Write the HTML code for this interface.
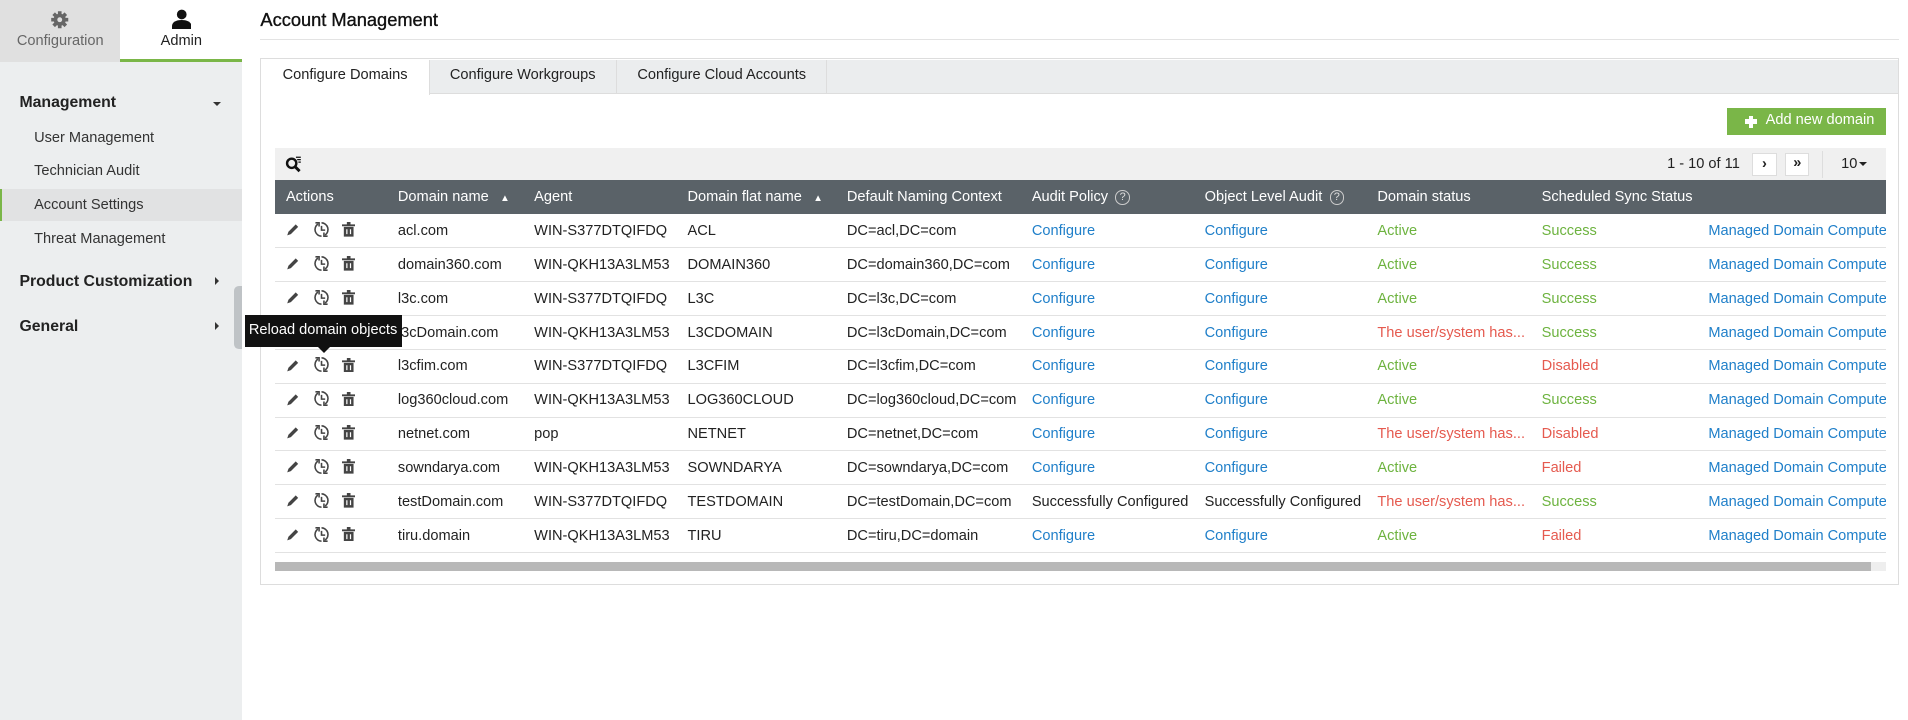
<!DOCTYPE html>
<html><head><meta charset="utf-8"><style>
*{margin:0;padding:0;box-sizing:border-box}
html,body{width:1908px;height:720px;overflow:hidden;background:#fff}
#w{width:1568px;height:592px;zoom:1.21684;position:relative;font-family:"Liberation Sans",sans-serif;font-size:12px;color:#222}
.a{position:absolute}
#sb{left:0;top:0;width:199px;height:592px;background:#eceeef}
.si{position:absolute;left:28px;font-size:12px;color:#333}
.sh{position:absolute;left:16px;font-size:13px;font-weight:bold;color:#222}
table{border-collapse:collapse;position:absolute;left:226px;top:148px;width:1324px;table-layout:fixed}
th{background:#5a6268;color:#fff;font-weight:normal;text-align:left;height:28px;padding:0;white-space:nowrap;overflow:hidden}
td{height:27.8px;border-bottom:1px solid #e2e2e2;padding:0;white-space:nowrap;overflow:hidden}
.l{color:#1f7fc9}.g{color:#6db33f}.r{color:#e55a4f}
.q{display:inline-block;width:12px;height:12px;border:1px solid #ccc;border-radius:50%;font-size:9px;text-align:center;line-height:10px;margin-left:6px;color:#ddd;vertical-align:middle}
.ic{display:inline-flex;gap:10px;align-items:center;padding-left:9px}
</style></head><body><div id="w">
<div id="sb" class="a">
<div class="a" style="left:0;top:0;width:99px;height:51px;background:#e0e0e0"></div>
<div class="a" style="left:99px;top:0;width:100px;height:51px;background:#fff;border-bottom:3px solid #7ab648"></div>
<svg class="a" style="left:41px;top:8px" width="16" height="16" viewBox="0 0 16 16"><circle cx="8" cy="8" r="5" fill="#666"/><g stroke="#666" stroke-width="3"><path d="M8 1v14M1 8h14M3 3l10 10M13 3L3 13"/></g><circle cx="8" cy="8" r="2" fill="#e0e0e0"/></svg>
<div class="a" style="left:0;top:27px;width:99px;text-align:center;color:#666">Configuration</div>
<svg class="a" style="left:141px;top:7px" width="16" height="17" viewBox="0 0 16 17"><circle cx="8" cy="4.5" r="4" fill="#111"/><path d="M0 17v-3c0-3 3-5 8-5s8 2 8 5v3z" fill="#111"/></svg>
<div class="a" style="left:99px;top:27px;width:100px;text-align:center;color:#222">Admin</div>
<div class="sh" style="top:77px">Management</div>
<div class="a" style="left:175px;top:84px;border:4px solid transparent;border-top:4px solid #333"></div>
<div class="si" style="top:107px">User Management</div>
<div class="si" style="top:134px">Technician Audit</div>
<div class="a" style="left:0;top:155px;width:199px;height:27px;background:#e1e2e3;border-left:2px solid #7ab648"></div>
<div class="si" style="top:162px">Account Settings</div>
<div class="si" style="top:190px">Threat Management</div>
<div class="sh" style="top:224px">Product Customization</div>
<div class="a" style="left:177px;top:228px;border:4px solid transparent;border-left:4px solid #333"></div>
<div class="sh" style="top:261px">General</div>
<div class="a" style="left:177px;top:265px;border:4px solid transparent;border-left:4px solid #333"></div>
<div class="a" style="left:192px;top:235px;width:7px;height:52px;background:#bfc3c6;border-radius:4px 0 0 4px"></div>
</div>
<div class="a" style="left:214px;top:7px;font-size:15px;color:#111;-webkit-text-stroke:0.3px #111">Account Management</div>
<div class="a" style="left:214px;top:32px;width:1347px;height:1px;background:#e3e3e3"></div>
<div class="a" style="left:214px;top:48px;width:1347px;height:433px;border:1px solid #ddd"></div>
<div class="a" style="left:215px;top:49px;width:1345px;height:28px;background:#ebedee;border-bottom:1px solid #ddd"></div>
<div class="a" style="left:215px;top:49px;width:138px;height:29px;background:#fff;border-right:1px solid #ddd;text-align:center;line-height:26px">Configure Domains</div>
<div class="a" style="left:353px;top:49px;width:154px;height:28px;border-right:1px solid #ddd;text-align:center;line-height:26px">Configure Workgroups</div>
<div class="a" style="left:507px;top:49px;width:173px;height:28px;border-right:1px solid #ddd;text-align:center;line-height:26px">Configure Cloud Accounts</div>
<div class="a" style="left:1419px;top:89px;width:131px;height:22px;background:#7ab648;color:#fff;line-height:21px;padding-left:32px">Add new domain</div>
<div class="a" style="left:1434px;top:95px;width:10px;height:10px"><div class="a" style="left:3px;top:0;width:4px;height:10px;background:#fff"></div><div class="a" style="left:0;top:3px;width:10px;height:4px;background:#fff"></div></div>
<div class="a" style="left:226px;top:122px;width:1324px;height:26px;background:#f0f0f0"></div>
<svg class="a" style="left:234px;top:128px" width="14" height="14" viewBox="0 0 14 14"><circle cx="5.5" cy="6" r="3.8" fill="none" stroke="#111" stroke-width="2"/><path d="M8 8.5l4 4" stroke="#111" stroke-width="2.4"/><path d="M9 1h4M10 3h3M11 5h2" stroke="#111"/></svg>
<div class="a" style="left:1370px;top:128px">1 - 10 of 11</div>
<div class="a" style="left:1440px;top:126px;width:20px;height:19px;background:#fff;border:1px solid #ddd;text-align:center;font-weight:bold;line-height:17px">›</div>
<div class="a" style="left:1467px;top:126px;width:20px;height:19px;background:#fff;border:1px solid #ddd;text-align:center;font-weight:bold;line-height:16px">»</div>
<div class="a" style="left:1497px;top:124px;width:1px;height:22px;background:#ddd"></div>
<div class="a" style="left:1513px;top:128px">10</div>
<div class="a" style="left:1528px;top:133px;border:4px solid transparent;border-top:4px solid #222"></div>
<table>
<colgroup><col style="width:101px"><col style="width:112px"><col style="width:126px"><col style="width:131px"><col style="width:152px"><col style="width:142px"><col style="width:142px"><col style="width:135px"><col style="width:137px"><col></colgroup>
<tr><th style="padding-left:9px">Actions</th><th>Domain name <span style="font-size:8px;margin-left:6px">▲</span></th><th>Agent</th><th>Domain flat name <span style="font-size:8px;margin-left:6px">▲</span></th><th>Default Naming Context</th><th>Audit Policy<span class="q">?</span></th><th>Object Level Audit<span class="q">?</span></th><th>Domain status</th><th>Scheduled Sync Status</th><th></th></tr>
</table>
<div id="rows"></div>
<div class="a" style="left:226px;top:462px;width:1324px;height:7px;background:#eee"><div style="width:1312px;height:7px;background:#b8b8b8"></div></div>
<div class="a" style="left:201px;top:259px;width:129px;height:26px;background:#111;color:#fff;line-height:25px;text-align:center">Reload domain objects</div>
<div class="a" style="left:261px;top:285px;border:5px solid transparent;border-top:5px solid #111"></div>
<script>
var R=[["acl.com","WIN-S377DTQIFDQ","ACL","DC=acl,DC=com","","","Active","Success"],
["domain360.com","WIN-QKH13A3LM53","DOMAIN360","DC=domain360,DC=com","","","Active","Success"],
["l3c.com","WIN-S377DTQIFDQ","L3C","DC=l3c,DC=com","","","Active","Success"],
["l3cDomain.com","WIN-QKH13A3LM53","L3CDOMAIN","DC=l3cDomain,DC=com","","","The user/system has...","Success"],
["l3cfim.com","WIN-S377DTQIFDQ","L3CFIM","DC=l3cfim,DC=com","","","Active","Disabled"],
["log360cloud.com","WIN-QKH13A3LM53","LOG360CLOUD","DC=log360cloud,DC=com","","","Active","Success"],
["netnet.com","pop","NETNET","DC=netnet,DC=com","","","The user/system has...","Disabled"],
["sowndarya.com","WIN-QKH13A3LM53","SOWNDARYA","DC=sowndarya,DC=com","","","Active","Failed"],
["testDomain.com","WIN-S377DTQIFDQ","TESTDOMAIN","DC=testDomain,DC=com","s","s","The user/system has...","Success"],
["tiru.domain","WIN-QKH13A3LM53","TIRU","DC=tiru,DC=domain","","","Active","Failed"]];
var ic='<span class="ic"><svg width="12" height="12" viewBox="0 0 12 12"><path d="M1 11l1-3 6-6 2 2-6 6z" fill="#444"/></svg><svg width="14" height="14" viewBox="0 0 14 14" fill="none" stroke="#444" stroke-width="1.3"><path d="M4 2.5A5.5 5.5 0 0 0 7 12.5M10 11.5A5.5 5.5 0 0 0 7 1.5"/><path d="M7 4v3.5h3"/><path d="M2 1.5h3v3M12 12.5H9v-3"/></svg><svg width="11" height="12" viewBox="0 0 11 12"><path d="M0 2h11v1.5H0zM4 0h3v2H4zM1.5 4h8v8h-8z" fill="#444"/><path d="M4 6v4M7 6v4" stroke="#fff"/></svg></span>';
var h='<table style="top:176px"><colgroup><col style="width:101px"><col style="width:112px"><col style="width:126px"><col style="width:131px"><col style="width:152px"><col style="width:142px"><col style="width:142px"><col style="width:135px"><col style="width:137px"><col></colgroup>';
R.forEach(function(r){var st=r[6]=="Active"?"g":"r",sy=r[7]=="Success"?"g":"r";
h+='<tr><td>'+ic+'</td><td>'+r[0]+'</td><td>'+r[1]+'</td><td>'+r[2]+'</td><td>'+r[3]+'</td><td'+(r[4]?'>Successfully Configured':' class="l">Configure')+'</td><td'+(r[5]?'>Successfully Configured':' class="l">Configure')+'</td><td class="'+st+'">'+r[6]+'</td><td class="'+sy+'">'+r[7]+'</td><td class="l">Managed Domain Computers</td></tr>';});
document.getElementById('rows').innerHTML=h+'</table>';
</script>
</div></body></html>
